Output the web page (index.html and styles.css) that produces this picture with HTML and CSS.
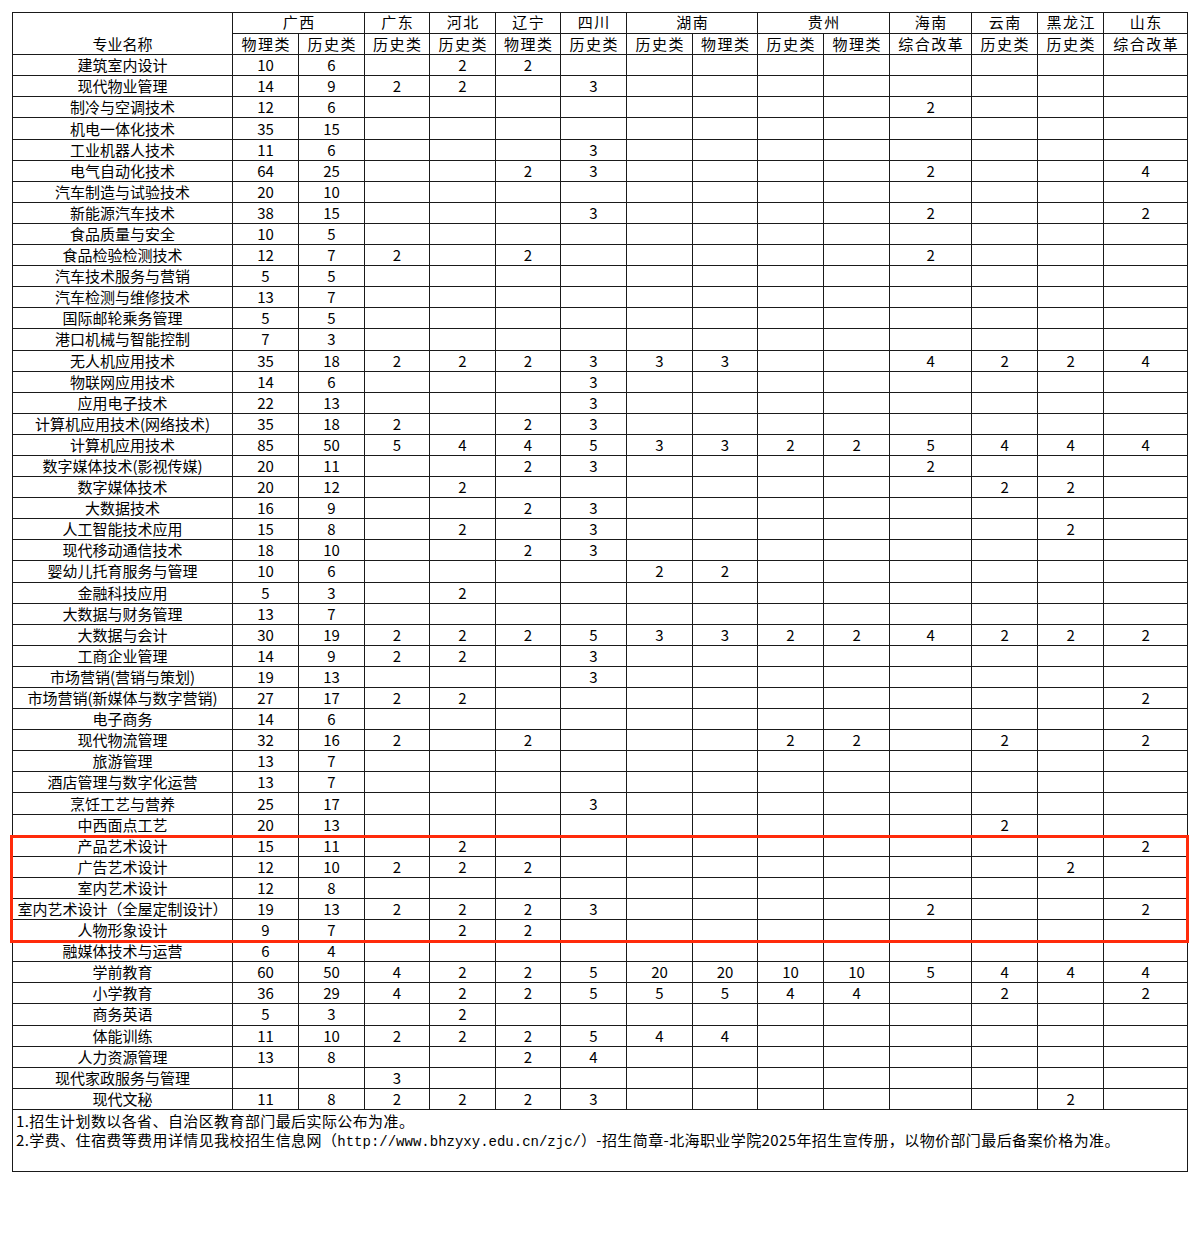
FILE: index.html
```html
<!DOCTYPE html>
<html lang="zh-CN">
<head>
<meta charset="utf-8">
<title>招生计划</title>
<link rel="stylesheet" href="styles.css">
</head>
<body>
<div class="page">
  <div class="sheet">
    <table class="plan">
      <colgroup>
        <col class="c-name"><col class="c66"><col class="c66"><col class="c65"><col class="c66"><col class="c65"><col class="c66"><col class="c66"><col class="c65"><col class="c66"><col class="c66"><col class="c82"><col class="c66"><col class="c66"><col class="c-last">
      </colgroup>
      <thead>
        <tr class="head-prov">
          <th rowspan="2" class="name-head">专业名称</th>
          <th colspan="2">广西</th>
          <th>广东</th>
          <th>河北</th>
          <th>辽宁</th>
          <th>四川</th>
          <th colspan="2">湖南</th>
          <th colspan="2">贵州</th>
          <th>海南</th>
          <th>云南</th>
          <th>黑龙江</th>
          <th>山东</th>
        </tr>
        <tr class="head-type">
          <th>物理类</th><th>历史类</th><th>历史类</th><th>历史类</th><th>物理类</th><th>历史类</th><th>历史类</th><th>物理类</th><th>历史类</th><th>物理类</th><th>综合改革</th><th>历史类</th><th>历史类</th><th>综合改革</th>
        </tr>
      </thead>
      <tbody>
        <tr><td>建筑室内设计</td><td>10</td><td>6</td><td></td><td>2</td><td>2</td><td></td><td></td><td></td><td></td><td></td><td></td><td></td><td></td><td></td></tr>
        <tr><td>现代物业管理</td><td>14</td><td>9</td><td>2</td><td>2</td><td></td><td>3</td><td></td><td></td><td></td><td></td><td></td><td></td><td></td><td></td></tr>
        <tr><td>制冷与空调技术</td><td>12</td><td>6</td><td></td><td></td><td></td><td></td><td></td><td></td><td></td><td></td><td>2</td><td></td><td></td><td></td></tr>
        <tr><td>机电一体化技术</td><td>35</td><td>15</td><td></td><td></td><td></td><td></td><td></td><td></td><td></td><td></td><td></td><td></td><td></td><td></td></tr>
        <tr><td>工业机器人技术</td><td>11</td><td>6</td><td></td><td></td><td></td><td>3</td><td></td><td></td><td></td><td></td><td></td><td></td><td></td><td></td></tr>
        <tr><td>电气自动化技术</td><td>64</td><td>25</td><td></td><td></td><td>2</td><td>3</td><td></td><td></td><td></td><td></td><td>2</td><td></td><td></td><td>4</td></tr>
        <tr><td>汽车制造与试验技术</td><td>20</td><td>10</td><td></td><td></td><td></td><td></td><td></td><td></td><td></td><td></td><td></td><td></td><td></td><td></td></tr>
        <tr><td>新能源汽车技术</td><td>38</td><td>15</td><td></td><td></td><td></td><td>3</td><td></td><td></td><td></td><td></td><td>2</td><td></td><td></td><td>2</td></tr>
        <tr><td>食品质量与安全</td><td>10</td><td>5</td><td></td><td></td><td></td><td></td><td></td><td></td><td></td><td></td><td></td><td></td><td></td><td></td></tr>
        <tr><td>食品检验检测技术</td><td>12</td><td>7</td><td>2</td><td></td><td>2</td><td></td><td></td><td></td><td></td><td></td><td>2</td><td></td><td></td><td></td></tr>
        <tr><td>汽车技术服务与营销</td><td>5</td><td>5</td><td></td><td></td><td></td><td></td><td></td><td></td><td></td><td></td><td></td><td></td><td></td><td></td></tr>
        <tr><td>汽车检测与维修技术</td><td>13</td><td>7</td><td></td><td></td><td></td><td></td><td></td><td></td><td></td><td></td><td></td><td></td><td></td><td></td></tr>
        <tr><td>国际邮轮乘务管理</td><td>5</td><td>5</td><td></td><td></td><td></td><td></td><td></td><td></td><td></td><td></td><td></td><td></td><td></td><td></td></tr>
        <tr><td>港口机械与智能控制</td><td>7</td><td>3</td><td></td><td></td><td></td><td></td><td></td><td></td><td></td><td></td><td></td><td></td><td></td><td></td></tr>
        <tr><td>无人机应用技术</td><td>35</td><td>18</td><td>2</td><td>2</td><td>2</td><td>3</td><td>3</td><td>3</td><td></td><td></td><td>4</td><td>2</td><td>2</td><td>4</td></tr>
        <tr><td>物联网应用技术</td><td>14</td><td>6</td><td></td><td></td><td></td><td>3</td><td></td><td></td><td></td><td></td><td></td><td></td><td></td><td></td></tr>
        <tr><td>应用电子技术</td><td>22</td><td>13</td><td></td><td></td><td></td><td>3</td><td></td><td></td><td></td><td></td><td></td><td></td><td></td><td></td></tr>
        <tr><td>计算机应用技术(网络技术)</td><td>35</td><td>18</td><td>2</td><td></td><td>2</td><td>3</td><td></td><td></td><td></td><td></td><td></td><td></td><td></td><td></td></tr>
        <tr><td>计算机应用技术</td><td>85</td><td>50</td><td>5</td><td>4</td><td>4</td><td>5</td><td>3</td><td>3</td><td>2</td><td>2</td><td>5</td><td>4</td><td>4</td><td>4</td></tr>
        <tr><td>数字媒体技术(影视传媒)</td><td>20</td><td>11</td><td></td><td></td><td>2</td><td>3</td><td></td><td></td><td></td><td></td><td>2</td><td></td><td></td><td></td></tr>
        <tr><td>数字媒体技术</td><td>20</td><td>12</td><td></td><td>2</td><td></td><td></td><td></td><td></td><td></td><td></td><td></td><td>2</td><td>2</td><td></td></tr>
        <tr><td>大数据技术</td><td>16</td><td>9</td><td></td><td></td><td>2</td><td>3</td><td></td><td></td><td></td><td></td><td></td><td></td><td></td><td></td></tr>
        <tr><td>人工智能技术应用</td><td>15</td><td>8</td><td></td><td>2</td><td></td><td>3</td><td></td><td></td><td></td><td></td><td></td><td></td><td>2</td><td></td></tr>
        <tr><td>现代移动通信技术</td><td>18</td><td>10</td><td></td><td></td><td>2</td><td>3</td><td></td><td></td><td></td><td></td><td></td><td></td><td></td><td></td></tr>
        <tr><td>婴幼儿托育服务与管理</td><td>10</td><td>6</td><td></td><td></td><td></td><td></td><td>2</td><td>2</td><td></td><td></td><td></td><td></td><td></td><td></td></tr>
        <tr><td>金融科技应用</td><td>5</td><td>3</td><td></td><td>2</td><td></td><td></td><td></td><td></td><td></td><td></td><td></td><td></td><td></td><td></td></tr>
        <tr><td>大数据与财务管理</td><td>13</td><td>7</td><td></td><td></td><td></td><td></td><td></td><td></td><td></td><td></td><td></td><td></td><td></td><td></td></tr>
        <tr><td>大数据与会计</td><td>30</td><td>19</td><td>2</td><td>2</td><td>2</td><td>5</td><td>3</td><td>3</td><td>2</td><td>2</td><td>4</td><td>2</td><td>2</td><td>2</td></tr>
        <tr><td>工商企业管理</td><td>14</td><td>9</td><td>2</td><td>2</td><td></td><td>3</td><td></td><td></td><td></td><td></td><td></td><td></td><td></td><td></td></tr>
        <tr><td>市场营销(营销与策划)</td><td>19</td><td>13</td><td></td><td></td><td></td><td>3</td><td></td><td></td><td></td><td></td><td></td><td></td><td></td><td></td></tr>
        <tr><td>市场营销(新媒体与数字营销)</td><td>27</td><td>17</td><td>2</td><td>2</td><td></td><td></td><td></td><td></td><td></td><td></td><td></td><td></td><td></td><td>2</td></tr>
        <tr><td>电子商务</td><td>14</td><td>6</td><td></td><td></td><td></td><td></td><td></td><td></td><td></td><td></td><td></td><td></td><td></td><td></td></tr>
        <tr><td>现代物流管理</td><td>32</td><td>16</td><td>2</td><td></td><td>2</td><td></td><td></td><td></td><td>2</td><td>2</td><td></td><td>2</td><td></td><td>2</td></tr>
        <tr><td>旅游管理</td><td>13</td><td>7</td><td></td><td></td><td></td><td></td><td></td><td></td><td></td><td></td><td></td><td></td><td></td><td></td></tr>
        <tr><td>酒店管理与数字化运营</td><td>13</td><td>7</td><td></td><td></td><td></td><td></td><td></td><td></td><td></td><td></td><td></td><td></td><td></td><td></td></tr>
        <tr><td>烹饪工艺与营养</td><td>25</td><td>17</td><td></td><td></td><td></td><td>3</td><td></td><td></td><td></td><td></td><td></td><td></td><td></td><td></td></tr>
        <tr><td>中西面点工艺</td><td>20</td><td>13</td><td></td><td></td><td></td><td></td><td></td><td></td><td></td><td></td><td></td><td>2</td><td></td><td></td></tr>
        <tr><td>产品艺术设计</td><td>15</td><td>11</td><td></td><td>2</td><td></td><td></td><td></td><td></td><td></td><td></td><td></td><td></td><td></td><td>2</td></tr>
        <tr><td>广告艺术设计</td><td>12</td><td>10</td><td>2</td><td>2</td><td>2</td><td></td><td></td><td></td><td></td><td></td><td></td><td></td><td>2</td><td></td></tr>
        <tr><td>室内艺术设计</td><td>12</td><td>8</td><td></td><td></td><td></td><td></td><td></td><td></td><td></td><td></td><td></td><td></td><td></td><td></td></tr>
        <tr><td>室内艺术设计（全屋定制设计）</td><td>19</td><td>13</td><td>2</td><td>2</td><td>2</td><td>3</td><td></td><td></td><td></td><td></td><td>2</td><td></td><td></td><td>2</td></tr>
        <tr><td>人物形象设计</td><td>9</td><td>7</td><td></td><td>2</td><td>2</td><td></td><td></td><td></td><td></td><td></td><td></td><td></td><td></td><td></td></tr>
        <tr><td>融媒体技术与运营</td><td>6</td><td>4</td><td></td><td></td><td></td><td></td><td></td><td></td><td></td><td></td><td></td><td></td><td></td><td></td></tr>
        <tr><td>学前教育</td><td>60</td><td>50</td><td>4</td><td>2</td><td>2</td><td>5</td><td>20</td><td>20</td><td>10</td><td>10</td><td>5</td><td>4</td><td>4</td><td>4</td></tr>
        <tr><td>小学教育</td><td>36</td><td>29</td><td>4</td><td>2</td><td>2</td><td>5</td><td>5</td><td>5</td><td>4</td><td>4</td><td></td><td>2</td><td></td><td>2</td></tr>
        <tr><td>商务英语</td><td>5</td><td>3</td><td></td><td>2</td><td></td><td></td><td></td><td></td><td></td><td></td><td></td><td></td><td></td><td></td></tr>
        <tr><td>体能训练</td><td>11</td><td>10</td><td>2</td><td>2</td><td>2</td><td>5</td><td>4</td><td>4</td><td></td><td></td><td></td><td></td><td></td><td></td></tr>
        <tr><td>人力资源管理</td><td>13</td><td>8</td><td></td><td></td><td>2</td><td>4</td><td></td><td></td><td></td><td></td><td></td><td></td><td></td><td></td></tr>
        <tr><td>现代家政服务与管理</td><td></td><td></td><td>3</td><td></td><td></td><td></td><td></td><td></td><td></td><td></td><td></td><td></td><td></td><td></td></tr>
        <tr><td>现代文秘</td><td>11</td><td>8</td><td>2</td><td>2</td><td>2</td><td>3</td><td></td><td></td><td></td><td></td><td></td><td></td><td>2</td><td></td></tr>
        <tr class="notes-row">
          <td colspan="15" class="notes">
            <p>1.招生计划数以各省、自治区教育部门最后实际公布为准。</p>
            <p>2.学费、住宿费等费用详情见我校招生信息网（<span class="url">http://www.bhzyxy.edu.cn/zjc/</span>）-招生简章-北海职业学院2025年招生宣传册，以物价部门最后备案价格为准。</p>
          </td>
        </tr>
      </tbody>
    </table>
    <div class="highlight"></div>
  </div>
</div>
</body>
</html>
```

FILE: styles.css
```css
html, body {
  margin: 0;
  padding: 0;
  background: #ffffff;
}

body {
  font-family: "Noto Sans CJK SC", "Liberation Sans", sans-serif;
  color: #000000;
}

.page {
  padding: 12px 0 0 12px;
}

.sheet {
  position: relative;
  width: 1175px;
}

.plan {
  border-collapse: collapse;
  table-layout: fixed;
  width: 1175px;
}

.c-name { width: 220px; }
.c66 { width: 66px; }
.c65 { width: 65px; }
.c82 { width: 82px; }
.c-last { width: 84px; }

.plan th,
.plan td {
  border: 1px solid #1a1a1a;
  padding: 0;
  text-align: center;
  vertical-align: middle;
  white-space: nowrap;
}

.plan tr {
  height: 21.1px;
}

.plan th {
  font-weight: normal;
  font-size: 15px;
  line-height: 18px;
  letter-spacing: 1.5px;
  text-indent: 1.5px;
}

.plan .head-prov th {
  vertical-align: top;
  padding-top: 0;
}

.plan .head-type th {
  vertical-align: middle;
}

.plan .head-prov th.name-head {
  font-size: 15px;
  vertical-align: bottom;
  line-height: 18px;
  padding-bottom: 1px;
  letter-spacing: 0;
  text-indent: 0;
}

.plan td {
  font-size: 15px;
  line-height: 18px;
}

.plan tr.notes-row {
  height: 62px;
}

.plan td.notes {
  text-align: left;
  vertical-align: top;
  padding: 0 0 0 3px;
}

.notes p {
  margin: 0;
  font-size: 15px;
  line-height: 19px;
  letter-spacing: 0.4px;
}

.notes p:first-child {
  margin-top: 1px;
}

.url {
  font-family: "Liberation Mono", monospace;
  font-size: 14px;
  letter-spacing: 0;
}

.highlight {
  position: absolute;
  left: -2px;
  top: 823px;
  width: 1179px;
  height: 108px;
  box-sizing: border-box;
  border: 3px solid #ff2a0a;
  pointer-events: none;
}
```
